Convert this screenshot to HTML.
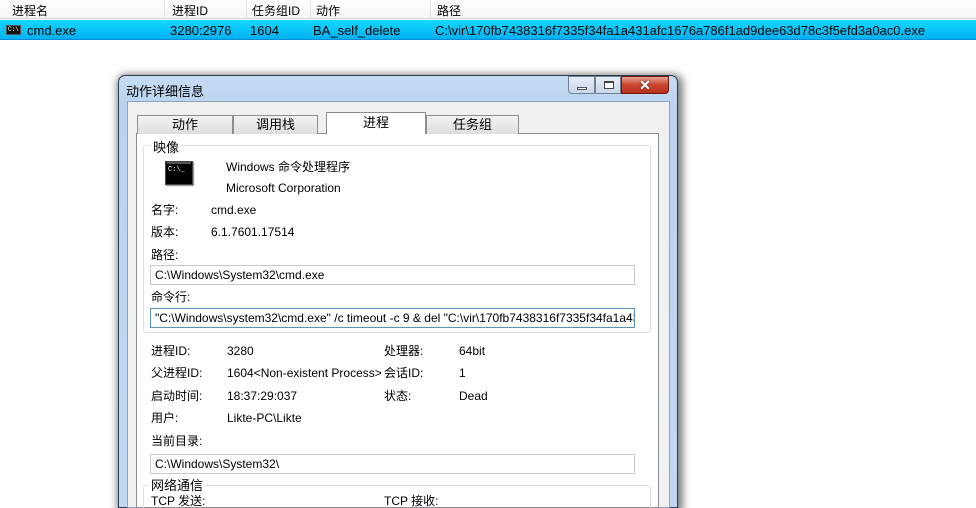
<!DOCTYPE html>
<html style="width:976px;height:508px;overflow:hidden"><head><meta charset="utf-8"><style>
*{margin:0;padding:0;box-sizing:border-box}
body{width:976px;height:508px;background:#fff;position:relative;overflow:hidden;font-family:"Liberation Sans","Noto Sans CJK SC",sans-serif;font-size:12px;color:#000}
.a{position:absolute;white-space:nowrap}
.hdr{position:absolute;left:0;top:0;width:976px;height:19px;background:linear-gradient(#fff,#f3f5f8);border-bottom:1px solid #d5d5d5}
.hdr span{position:absolute;top:2px;font-size:12px}
.sep{position:absolute;top:0;width:1px;height:18px;background:#e3e6ea}
.sel{position:absolute;left:0;top:20px;width:976px;height:20px;background:linear-gradient(#13d9ff,#00b0f0);border-bottom:1px solid #0a8cd8}
.sel span{position:absolute;top:3px}
.win{position:absolute;left:118px;top:75px;width:560px;height:440px;border:1px solid #2c3a4c;border-radius:7px 7px 0 0;background:linear-gradient(#c6dcf3,#b9d3ef 30px,#c0d8f2);box-shadow:2px 2px 8px 3px rgba(0,0,0,.5)}
.client{position:absolute;left:127px;top:101px;width:543px;height:410px;background:#f0f0f0;border:1px solid #8ea4bc}
.tab{position:absolute;top:115px;height:19px;border:1px solid #8d8d8d;border-bottom:none;background:linear-gradient(#f2f2f2,#dedede);text-align:center;font-size:13px;line-height:18px}
.panel{position:absolute;left:136px;top:133px;width:523px;height:380px;background:#fff;border:1px solid #898c95}
.grp{position:absolute;border:1px solid #d5dfe5;border-radius:3px}
.leg{position:absolute;background:#fff;padding:0 2px;font-size:13px}
.box{position:absolute;height:20px;border:1px solid #c5c8cc;background:#fff;padding-left:4px;line-height:18px;font-size:12px;overflow:hidden;white-space:nowrap}
.l{font-size:12px}
</style></head><body>
<div class="hdr">
<span style="left:12px">进程名</span><span style="left:172px">进程ID</span><span style="left:252px">任务组ID</span><span style="left:316px">动作</span><span style="left:437px">路径</span>
<div class="sep" style="left:164px"></div><div class="sep" style="left:246px"></div><div class="sep" style="left:310px"></div><div class="sep" style="left:430px"></div>
</div>
<div class="sel">
<div class="a" style="left:6px;top:5px;width:15px;height:10px;background:#111;border:1px solid #555"><div style="position:absolute;left:1px;top:1px;font-size:6px;color:#fff;line-height:6px;font-family:'Liberation Mono'">C:\</div></div>
<span style="left:27px;font-size:13px">cmd.exe</span><span style="left:170px;font-size:13px">3280:2976</span><span style="left:250px;font-size:13px">1604</span><span style="left:313px;font-size:13px">BA_self_delete</span><span style="left:435px;font-size:13px">C:\vir\170fb7438316f7335f34fa1a431afc1676a786f1ad9dee63d78c3f5efd3a0ac0.exe</span>
</div>
<div class="win" style="height:433px"></div>
<div class="a" style="left:126px;top:81px;font-size:13px">动作详细信息</div>
<div class="a" style="left:568px;top:76px;width:27px;height:18px;border:1px solid #6f7f95;border-radius:0 0 0 4px;background:linear-gradient(#e6eef8,#c8d6e8)"><div style="position:absolute;left:8px;top:10px;width:10px;height:3px;border:1px solid #555;background:#fff"></div></div>
<div class="a" style="left:595px;top:76px;width:26px;height:18px;border:1px solid #6f7f95;background:linear-gradient(#e6eef8,#c8d6e8)"><div style="position:absolute;left:8px;top:4px;width:10px;height:8px;border:1px solid #444;border-top-width:2px;background:#fff"></div></div>
<div class="a" style="left:621px;top:76px;width:48px;height:18px;border:1px solid #6a1a10;border-radius:0 0 4px 0;background:linear-gradient(#e8a093,#c9452f 50%,#b9321c);color:#fff;font-weight:bold;font-size:14px;text-align:center;line-height:16px;text-shadow:0 0 2px #333">✕</div>
<div class="client" style="height:407px"></div>
<div class="panel" style="height:375px"></div>
<div class="tab" style="left:137px;width:96px">动作</div>
<div class="tab" style="left:233px;width:85px">调用栈</div>
<div class="tab" style="left:426px;width:93px">任务组</div>
<div class="tab" style="left:326px;top:112px;width:100px;height:22px;background:#fff;line-height:20px">进程</div>
<div class="grp" style="left:143px;top:145px;width:508px;height:188px"></div>
<div class="leg" style="left:151px;top:137px">映像</div>
<div class="a" style="left:165px;top:161px;width:28px;height:24px;background:#000;border:1px solid #444;box-shadow:1px 1px 1px #888"><div style="position:absolute;left:1px;top:0;width:24px;height:2px;background:#555"></div><div style="position:absolute;left:2px;top:4px;color:#fff;font-size:7px;font-family:'Liberation Mono'">C:\_</div></div>
<div class="a l" style="left:226px;top:158px">Windows 命令处理程序</div>
<div class="a l" style="left:226px;top:181px">Microsoft Corporation</div>
<div class="a l" style="left:151px;top:201px">名字:</div><div class="a l" style="left:211px;top:203px">cmd.exe</div>
<div class="a l" style="left:151px;top:223px">版本:</div><div class="a l" style="left:211px;top:225px">6.1.7601.17514</div>
<div class="a l" style="left:151px;top:246px">路径:</div>
<div class="box" style="left:150px;top:265px;width:485px">C:\Windows\System32\cmd.exe</div>
<div class="a l" style="left:151px;top:288px">命令行:</div>
<div class="box" style="left:150px;top:308px;width:485px;border-color:#5c93bc">"C:\Windows\system32\cmd.exe" /c timeout -c 9 &amp; del "C:\vir\170fb7438316f7335f34fa1a431afc16</div>
<div class="a l" style="left:151px;top:342px">进程ID:</div><div class="a l" style="left:227px;top:344px">3280</div>
<div class="a l" style="left:384px;top:342px">处理器:</div><div class="a l" style="left:459px;top:344px">64bit</div>
<div class="a l" style="left:151px;top:364px">父进程ID:</div><div class="a l" style="left:227px;top:366px">1604&lt;Non-existent Process&gt;</div>
<div class="a l" style="left:384px;top:364px">会话ID:</div><div class="a l" style="left:459px;top:366px">1</div>
<div class="a l" style="left:151px;top:387px">启动时间:</div><div class="a l" style="left:227px;top:389px">18:37:29:037</div>
<div class="a l" style="left:384px;top:387px">状态:</div><div class="a l" style="left:459px;top:389px">Dead</div>
<div class="a l" style="left:151px;top:409px">用户:</div><div class="a l" style="left:227px;top:411px">Likte-PC\Likte</div>
<div class="a l" style="left:151px;top:432px">当前目录:</div>
<div class="box" style="left:150px;top:454px;width:485px">C:\Windows\System32\</div>
<div class="grp" style="left:143px;top:485px;width:508px;height:30px"></div>
<div class="leg" style="left:149px;top:475px">网络通信</div>
<div class="a l" style="left:151px;top:492px">TCP 发送:</div>
<div class="a l" style="left:384px;top:492px">TCP 接收:</div>
</body></html>
